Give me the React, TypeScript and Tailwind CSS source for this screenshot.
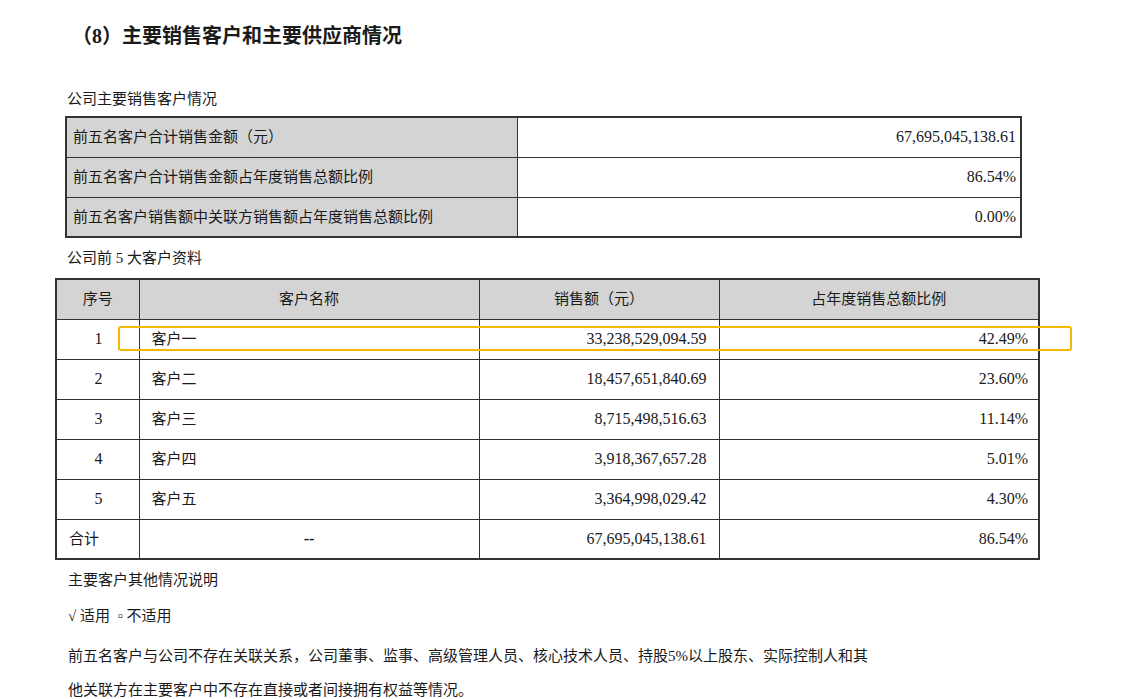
const font = { fontFamily: '"Liberation Serif", "Noto Sans CJK SC", serif' };

const summary = [
  ['前五名客户合计销售金额（元）', '67,695,045,138.61'],
  ['前五名客户合计销售金额占年度销售总额比例', '86.54%'],
  ['前五名客户销售额中关联方销售额占年度销售总额比例', '0.00%'],
];

const rows = [
  ['1', '客户一', '33,238,529,094.59', '42.49%'],
  ['2', '客户二', '18,457,651,840.69', '23.60%'],
  ['3', '客户三', '8,715,498,516.63', '11.14%'],
  ['4', '客户四', '3,918,367,657.28', '5.01%'],
  ['5', '客户五', '3,364,998,029.42', '4.30%'],
];

export default function App() {
  return (
    <div className="relative w-[1128px] h-[699px] overflow-hidden bg-white text-[#1a1a1a] text-[16px]" style={font}>
      <div className="pl-[72px] pt-[22px] text-[20px] font-bold leading-[28px]">（8）主要销售客户和主要供应商情况</div>

      <div className="pl-[67px] mt-[38px] leading-[22px] text-[15px]">公司主要销售客户情况</div>
      <table className="ml-[65px] mt-[6px] w-[957px] border-collapse border-2 border-[#333]">
        <tbody>
          {summary.map(([k, v]) => (
            <tr key={k} className="h-[40px]">
              <td className="w-[451px] bg-[#d4d4d4] border border-[#333] px-[6px] text-[15px]">{k}</td>
              <td className="border border-[#333] text-right px-[4px]">{v}</td>
            </tr>
          ))}
        </tbody>
      </table>

      <div className="pl-[67px] mt-[9px] leading-[22px] text-[15px]">公司前 5 大客户资料</div>
      <table className="ml-[55px] mt-[9px] w-[985px] border-collapse border-2 border-[#333]">
        <tbody>
          <tr className="h-[40px] bg-[#d4d4d4] text-[15px]">
            <td className="w-[83px] border border-[#333] text-center">序号</td>
            <td className="w-[340px] border border-[#333] text-center">客户名称</td>
            <td className="w-[240px] border border-[#333] text-center">销售额（元）</td>
            <td className="border border-[#333] text-center">占年度销售总额比例</td>
          </tr>
          {rows.map(r => (
            <tr key={r[0]} className="h-[40px]">
              <td className="border border-[#333] text-right pr-[36px]">{r[0]}</td>
              <td className="border border-[#333] px-[12px] text-[15px]">{r[1]}</td>
              <td className="border border-[#333] text-right px-[12px]">{r[2]}</td>
              <td className="border border-[#333] text-right px-[10px]">{r[3]}</td>
            </tr>
          ))}
          <tr className="h-[40px]">
            <td className="border border-[#333] px-[12px] text-[15px]">合计</td>
            <td className="border border-[#333] text-center font-bold">--</td>
            <td className="border border-[#333] text-right px-[12px]">67,695,045,138.61</td>
            <td className="border border-[#333] text-right px-[10px]">86.54%</td>
          </tr>
        </tbody>
      </table>

      <div className="pl-[68px] text-[15px] leading-[22px]">
        <div className="mt-[9px]">主要客户其他情况说明</div>
        <div className="mt-[14px]">√ 适用 &nbsp;▫ 不适用</div>
        <div className="mt-[12px] leading-[34px]">
          前五名客户与公司不存在关联关系，公司董事、监事、高级管理人员、核心技术人员、持股5%以上股东、实际控制人和其<br />
          他关联方在主要客户中不存在直接或者间接拥有权益等情况。
        </div>
      </div>

      <div className="absolute left-[118px] top-[326px] w-[954px] h-[25px] border-2 border-[#f5b800] rounded-[3px]" />
    </div>
  );
}
